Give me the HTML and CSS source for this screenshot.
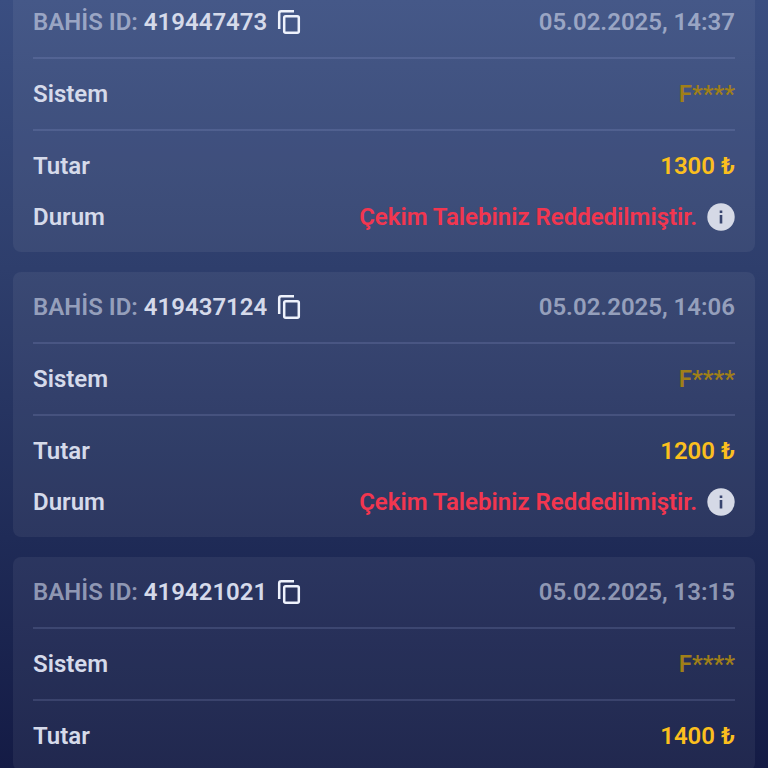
FILE: index.html
```html
<!DOCTYPE html>
<html lang="tr">
<head>
    <meta charset="UTF-8">
    <meta name="viewport" content="width=device-width, initial-scale=1.0">
    <title>Bahis ID</title>
    <link rel="stylesheet" href="styles.css">
</head>
<body>
    <!-- Shared icons -->
    <svg class="sprite" aria-hidden="true">
        <symbol id="copy" viewBox="0 0 26 26">
            <path fill="none" stroke="currentColor" stroke-width="2.500" d="M3.200 20V4.200q0-2 2-2H18"/>
            <rect x="8.200" y="7.200" width="14.600" height="16.600" rx="1.500" fill="none" stroke="currentColor" stroke-width="2.500"/>
        </symbol>
        <symbol id="info" viewBox="0 0 28 28">
            <circle cx="14" cy="14" r="13.700" fill="currentColor"/>
            <path fill="#38456f" d="M12.700 7.500h2.600v2.500h-2.600zM12.700 12h2.600v8.500h-2.600z"/>
        </symbol>
    </svg>

    <main class="list">
        <article class="card">
            <header class="row line">
                <div class="bet">
                    <span class="muted">BAHİS ID:</span>
                    <span>419447473</span>
                    <button class="icon-btn copy" aria-label="Kopyala"><svg><use href="#copy"/></svg></button>
                </div>
                <time class="muted">05.02.2025, 14:37</time>
            </header>
            <div class="row line">
                <span>Sistem</span>
                <span class="system">F****</span>
            </div>
            <div class="details">
                <div class="row">
                    <span>Tutar</span>
                    <span class="amount">1300 ₺</span>
                </div>
                <div class="row">
                    <span>Durum</span>
                    <div class="status">
                        <span>Çekim Talebiniz Reddedilmiştir.</span>
                        <button class="icon-btn" aria-label="Bilgi"><svg><use href="#info"/></svg></button>
                    </div>
                </div>
            </div>
        </article>

        <article class="card">
            <header class="row line">
                <div class="bet">
                    <span class="muted">BAHİS ID:</span>
                    <span>419437124</span>
                    <button class="icon-btn copy" aria-label="Kopyala"><svg><use href="#copy"/></svg></button>
                </div>
                <time class="muted">05.02.2025, 14:06</time>
            </header>
            <div class="row line">
                <span>Sistem</span>
                <span class="system">F****</span>
            </div>
            <div class="details">
                <div class="row">
                    <span>Tutar</span>
                    <span class="amount">1200 ₺</span>
                </div>
                <div class="row">
                    <span>Durum</span>
                    <div class="status">
                        <span>Çekim Talebiniz Reddedilmiştir.</span>
                        <button class="icon-btn" aria-label="Bilgi"><svg><use href="#info"/></svg></button>
                    </div>
                </div>
            </div>
        </article>

        <article class="card">
            <header class="row line">
                <div class="bet">
                    <span class="muted">BAHİS ID:</span>
                    <span>419421021</span>
                    <button class="icon-btn copy" aria-label="Kopyala"><svg><use href="#copy"/></svg></button>
                </div>
                <time class="muted">05.02.2025, 13:15</time>
            </header>
            <div class="row line">
                <span>Sistem</span>
                <span class="system">F****</span>
            </div>
            <div class="details">
                <div class="row">
                    <span>Tutar</span>
                    <span class="amount">1400 ₺</span>
                </div>
            </div>
        </article>
    </main>
</body>
</html>
```
FILE: styles.css
```css
* {
    box-sizing: border-box;
}

/* Global styles */
body {
    margin: 0;
    height: 100vh;
    overflow: hidden;
    background: linear-gradient(180deg, #3a4e81 0%, #2e3e6c 35%, #1f2b57 70%, #141b45 100%);
    color: #d5daea;
    font-family: Roboto, "Noto Sans", sans-serif;
    font-size: 24px;
    font-weight: 600;
    line-height: 30px;
}

.sprite {
    display: none;
}

/* The list is scrolled a little past the top of the first card */
.list {
    display: flex;
    flex-direction: column;
    gap: 20px;
    margin-top: -13px;
    padding: 0 13px;
}

/* Card styles */
.card {
    background-color: rgba(255, 255, 255, 0.06);
    border-radius: 8px;
    padding: 0 20px;
}

.row {
    display: flex;
    justify-content: space-between;
    align-items: center;
}

.line {
    padding: 20px 0;
    border-bottom: 2px solid rgba(160, 170, 220, 0.18);
}

.details {
    display: flex;
    flex-direction: column;
    gap: 21px;
    padding: 20px 0;
}

.bet {
    display: flex;
    align-items: center;
    gap: 6px;
}

.muted {
    color: rgba(213, 220, 238, 0.6);
}

.system {
    color: #a07f18;
}

.amount {
    color: #fbbf1e;
}

.status {
    display: flex;
    align-items: center;
    gap: 10px;
    color: #f2364f;
}

/* Icon buttons */
.icon-btn {
    display: flex;
    padding: 0;
    border: none;
    background: none;
    color: #d5d9e6;
    cursor: pointer;
}

.icon-btn svg {
    width: 28px;
    height: 28px;
}

.copy {
    margin-left: 3px;
    color: #eef2fc;
}

.copy svg {
    width: 26px;
    height: 26px;
}
```
